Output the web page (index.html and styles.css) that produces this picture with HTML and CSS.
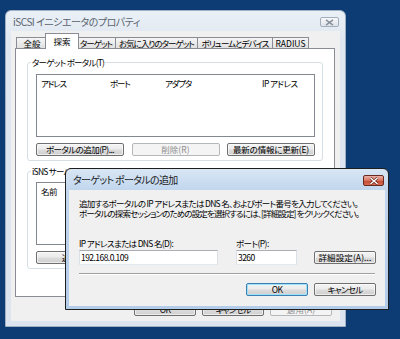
FILE: index.html
```html
<!DOCTYPE html>
<html lang="ja">
<head>
<meta charset="utf-8">
<title>iSCSI イニシエータのプロパティ</title>
<link rel="stylesheet" href="styles.css">
</head>
<body>
<div class="desktop">
  <div class="win">
    <div class="win-title">
      <span>iSCSI イニシエータのプロパティ</span>
      <span class="close-in"><svg width="9" height="7" viewBox="0 0 9 7"><path d="M1 0.8 L8 6.2 M8 0.8 L1 6.2" stroke="#8a939e" stroke-width="1.6"/></svg></span>
    </div>
    <div class="win-client">
      <div class="tabs">
        <div class="tab tab-general kanji">全般</div>
        <div class="tab tab-discovery sel kanji">探索</div>
        <div class="tab tab-targets">ターゲット</div>
        <div class="tab tab-fav">お気に入りのターゲット</div>
        <div class="tab tab-volumes">ボリュームとデバイス</div>
        <div class="tab tab-radius kanji">RADIUS</div>
      </div>
      <div class="panel">
        <fieldset class="group g1">
          <legend>ターゲット ポータル(T)</legend>
          <div class="list">
            <div class="list-head"><span>アドレス</span><span>ポート</span><span>アダプタ</span><span>IP アドレス</span></div>
          </div>
          <div class="btn-row">
            <button class="btn">ポータルの追加(P)...</button>
            <button class="btn kanji" disabled>削除(R)</button>
            <button class="btn semi">最新の情報に更新(E)</button>
          </div>
        </fieldset>
        <fieldset class="group g2">
          <legend>iSNS サーバー(I)</legend>
          <div class="list">
            <div class="list-head"><span>名前</span></div>
          </div>
          <div class="btn-row">
            <button class="btn kanji">追加(D)...</button>
            <button class="btn kanji" disabled>削除(M)</button>
            <button class="btn semi">最新の情報に更新(S)</button>
          </div>
        </fieldset>
      </div>
      <div class="foot">
        <button class="btn w62">OK</button>
        <button class="btn w62 kana">キャンセル</button>
        <button class="btn w62 kanji" disabled>適用(A)</button>
      </div>
    </div>
  </div>

  <div class="dlg">
    <div class="dlg-title">
      <span>ターゲット ポータルの追加</span>
      <span class="close-act"><svg width="10" height="8" viewBox="0 0 10 8"><path d="M1.5 1 L8.5 7 M8.5 1 L1.5 7" stroke="#5a1b12" stroke-width="2.6"/><path d="M1.5 1 L8.5 7 M8.5 1 L1.5 7" stroke="#ffffff" stroke-width="1.5"/></svg></span>
    </div>
    <div class="dlg-client">
      <div class="desc">
        <div class="desc-a">追加するポータルの IP アドレスまたは DNS 名、およびポート番号を入力してください。</div>
        <div class="desc-b">ポータルの探索セッションのための設定を選択するには、[詳細設定] をクリックください。</div>
      </div>
      <div class="fields">
        <div class="field f-host">
          <label>IP アドレスまたは DNS 名(D):</label>
          <div class="inp">192.168.0.109</div>
        </div>
        <div class="field f-port">
          <label>ポート(P):</label>
          <div class="inp">3260</div>
        </div>
        <button class="btn w62 btn-adv kanji">詳細設定(A)...</button>
      </div>
      <div class="sep"></div>
      <div class="dlg-foot">
        <button class="btn w62 default">OK</button>
        <button class="btn w62 kana">キャンセル</button>
      </div>
    </div>
  </div>
</div>
</body>
</html>
```

FILE: styles.css
```css
* { box-sizing: border-box; }

html, body {
  margin: 0;
  padding: 0;
}

body {
  width: 400px;
  height: 339px;
  overflow: hidden;
  background: #0d3b73;
  font-family: "Noto Sans CJK JP", "Noto Sans", sans-serif;
  font-size: 8.5px;
  letter-spacing: -0.6px;
  font-feature-settings: "palt";
  color: #000;
}

.desktop {
  position: relative;
  width: 400px;
  height: 339px;
}

/* letter-spacing helpers: kanji/latin text is wider, katakana narrower */
.kanji { letter-spacing: 0; }
.semi { letter-spacing: -0.2px; }
.kana { letter-spacing: -0.7px; }

/* ---------- outer (inactive) window ---------- */
.win {
  position: absolute;
  left: 5px;
  top: 10px;
  width: 341px;
  height: 317px;
  background: linear-gradient(#eaf0f6, #dfe7f1 30px, #dbe4ef);
  border: 1px solid #9fb0c4;
  border-radius: 6px 6px 0 0;
  padding: 0 5px 5px;
  display: flex;
  flex-direction: column;
}

.win-title {
  height: 20px;
  display: flex;
  align-items: center;
  justify-content: space-between;
  padding-left: 2px;
  color: #5a636e;
  font-size: 10px;
  letter-spacing: -0.48px;
}

.close-in {
  width: 19px;
  height: 10px;
  margin-right: 1px;
  margin-top: 2px;
  border: 1px solid #a3aebb;
  border-radius: 2px;
  background: linear-gradient(#f6f8fa, #dfe4ea);
  display: flex;
  align-items: center;
  justify-content: center;
}

.win-client {
  flex: 1;
  background: #f0f0f0;
  padding: 2px 5px 0 4px;
  display: flex;
  flex-direction: column;
}

/* ---------- tabs ---------- */
.tabs {
  display: flex;
  align-items: flex-end;
  height: 16px;
  padding-left: 1px;
  margin-bottom: -1px;
  position: relative;
  z-index: 1;
}

.tab {
  height: 11px;
  margin-bottom: 1px;
  margin-left: -1px;
  padding: 0;
  border: 1px solid #898c95;
  border-bottom: none;
  background: linear-gradient(#f5f5f5, #e1e1e1);
  line-height: 10px;
  text-align: center;
  white-space: nowrap;
  letter-spacing: -1px;
}

.tab.kanji { letter-spacing: 0; }

.tab-general { width: 32px; margin-left: 0; }
.tab-discovery { width: 34px; }
.tab-targets { width: 40px; }
.tab-fav { width: 83px; }
.tab-volumes { width: 76px; }
.tab-radius { width: 37px; }

.tab.sel {
  height: 16px;
  margin: 0 -2px 0 -3px;
  padding-top: 1px;
  background: #fff;
  position: relative;
  z-index: 2;
  line-height: 12px;
}

.panel {
  height: 249px;
  background: #fff;
  border: 1px solid #898c95;
  padding: 7px 11px 0;
  display: flex;
  flex-direction: column;
  gap: 4px;
}

/* ---------- group boxes ---------- */
.group {
  margin: 0;
  min-width: 0;
  border: 1px solid #d5dfe5;
  border-radius: 3px;
  padding: 6px 7px 4px 8px;
}

.group legend {
  padding: 0 1px;
  margin-left: -5px;
  line-height: 12px;
  height: 12px;
  letter-spacing: -0.75px;
}

.g2 { padding-top: 5px; }

.list {
  height: 63px;
  border: 1px solid #828790;
  background: #fff;
}

.list-head {
  display: grid;
  grid-template-columns: 69px 55px 97px 1fr;
  height: 16px;
  align-items: center;
  white-space: nowrap;
  letter-spacing: -1.2px;
}

.list-head span { padding-left: 4px; }
.list-head span:last-child { letter-spacing: -0.6px; }

.btn-row {
  display: flex;
  justify-content: space-between;
  margin-top: 6px;
}

/* ---------- buttons ---------- */
.btn {
  width: 88px;
  height: 13px;
  padding: 0;
  margin: 0;
  font-family: inherit;
  font-size: inherit;
  letter-spacing: -0.55px;
  font-feature-settings: "palt";
  line-height: 11px;
  color: #000;
  border: 1px solid #707070;
  border-radius: 2px;
  background: linear-gradient(#f3f3f3 0%, #ebebeb 48%, #dcdcdc 52%, #cfcfcf 100%);
  box-shadow: inset 0 0 0 1px rgba(255, 255, 255, 0.6);
  white-space: nowrap;
}

.btn.kanji { letter-spacing: 0.1px; }
.btn.semi { letter-spacing: -0.2px; }
.btn.kana { letter-spacing: -0.7px; }

.btn:disabled {
  color: #8d8d8d;
  border-color: #b5b8bb;
  background: #f4f4f4;
  box-shadow: none;
}

.w62 { width: 62px; }

.foot {
  display: flex;
  justify-content: flex-end;
  gap: 6px;
  margin-top: 6px;
  padding-right: 3px;
}

/* ---------- dialog (active) ---------- */
.dlg {
  position: absolute;
  left: 65px;
  top: 168px;
  width: 324px;
  height: 142px;
  border: 1px solid #1e1e1e;
  border-radius: 6px 6px 0 0;
  background: linear-gradient(#d9e6f4, #c2d7ee 20px, #b3cce9);
  padding: 0 3px 3px;
  display: flex;
  flex-direction: column;
}

.dlg-title {
  height: 21px;
  display: flex;
  align-items: center;
  justify-content: space-between;
  padding-left: 4px;
  font-size: 10px;
  letter-spacing: -0.67px;
  color: #1a1a1a;
}

.close-act {
  width: 21px;
  height: 11px;
  margin-right: 1px;
  margin-top: 2px;
  border: 1px solid #6a2a22;
  border-radius: 2px;
  background: linear-gradient(#eab1a7, #d9735f 50%, #c44a34 55%, #d66a50);
  display: flex;
  align-items: center;
  justify-content: center;
}

.dlg-client {
  flex: 1;
  background: #f0f0f0;
  padding: 8px 9px 0 10px;
  display: flex;
  flex-direction: column;
}

.desc {
  line-height: 10px;
  white-space: nowrap;
}

.desc-a { letter-spacing: -0.68px; }
.desc-b { letter-spacing: -0.87px; }

.fields {
  display: flex;
  align-items: flex-end;
  margin-top: 20px;
}

.field {
  display: flex;
  flex-direction: column;
  gap: 2px;
}

.field label {
  line-height: 10px;
  white-space: nowrap;
  letter-spacing: -0.66px;
}

.f-port label { letter-spacing: -0.55px; }

.f-host { width: 139px; }
.f-port { width: 61px; margin-left: 18px; }

.inp {
  height: 15px;
  border: 1px solid #abadb3;
  border-left-color: #dbdfe6;
  border-right-color: #dbdfe6;
  border-bottom-color: #e3e9ef;
  background: #fff;
  padding-left: 1px;
  line-height: 13px;
  letter-spacing: -0.55px;
}

.btn-adv {
  margin-left: 17px;
  margin-bottom: 1px;
}

.sep {
  margin-top: 8px;
  margin-right: 1px;
  border-top: 1px solid #a0a0a0;
  border-bottom: 1px solid #fff;
}

.dlg-foot {
  display: flex;
  justify-content: flex-end;
  gap: 6px;
  margin-top: 8px;
}

.btn.default {
  border-color: #3c7fb1;
  box-shadow: inset 0 0 0 1px #9fe1fb;
}
```
